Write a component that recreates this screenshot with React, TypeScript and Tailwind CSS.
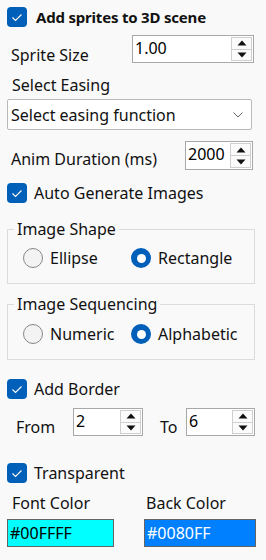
import React from "react";

const font = { fontFamily: '"Noto Sans", "Open Sans", sans-serif' };

function Check() {
  return (
    <div className="w-[20px] h-[20px] rounded-[4px] bg-[#005fb8] flex items-center justify-center shrink-0">
      <svg width="20" height="20" viewBox="0 0 20 20">
        <polyline points="5.5,10.5 8.5,13.5 14.5,7.5" fill="none" stroke="white" strokeWidth="1.1" />
      </svg>
    </div>
  );
}

function Radio({ checked }: { checked: boolean }) {
  return checked ? (
    <div className="w-[20px] h-[20px] rounded-full bg-[#005fb8] flex items-center justify-center shrink-0">
      <div className="w-[9px] h-[9px] rounded-full bg-white" />
    </div>
  ) : (
    <div className="w-[20px] h-[20px] rounded-full border border-[#878787] bg-[#f3f3f3] shrink-0" />
  );
}

function Tri({ up }: { up: boolean }) {
  return (
    <svg width="10" height="6" viewBox="0 0 10 6">
      {up ? <polygon points="0.5,5.5 5,0.5 9.5,5.5" fill="#111" /> : <polygon points="0.5,0.5 9.5,0.5 5,5.5" fill="#111" />}
    </svg>
  );
}

function Spin({ value, w, h }: { value: string; w: string; h: string }) {
  return (
    <div className={`${w} ${h} flex border border-[#a8a8a8] bg-white shrink-0`}>
      <div className="flex-1 pl-[2px] pt-[2px] leading-[20px] text-[16px] text-black">{value}</div>
      <div className="w-[21px] flex flex-col my-[1px] mr-[1px] gap-0">
        <div className="flex-1 border border-[#cfcfcf] bg-[#fbfbfb] flex items-center justify-center">
          <Tri up />
        </div>
        <div className="flex-1 border border-t-0 border-[#cfcfcf] bg-[#fbfbfb] flex items-center justify-center">
          <Tri up={false} />
        </div>
      </div>
    </div>
  );
}

export default function App() {
  return (
    <div style={font} className="w-[266px] h-[560px] bg-[#f9f9f9] text-[16px] text-[#111] px-[7px] flex flex-col overflow-hidden">
      {/* title */}
      <div className="mt-[7px] h-[20px] flex items-center">
        <Check />
        <span className="ml-[9px] font-bold text-[15px] tracking-[-0.2px] leading-[20px] whitespace-nowrap">Add sprites to 3D scene</span>
      </div>

      {/* sprite size */}
      <div className="mt-[8px] flex items-start">
        <span className="pl-[4px] pt-[10px] leading-[20px]">Sprite Size</span>
        <div className="ml-auto mr-[5px]">
          <Spin value="1.00" w="w-[122px]" h="h-[28px]" />
        </div>
      </div>

      <span className="mt-[10px] pl-[5px] leading-[20px]">Select Easing</span>

      <div className="mt-[4px] w-[245px] h-[31px] border border-[#b9b9b9] rounded-[2px] bg-white flex items-center pl-[3px] pr-[8px]">
        <span className="flex-1 leading-[20px]">Select easing function</span>
        <svg width="10" height="6" viewBox="0 0 10 6">
          <polyline points="0.5,0.5 5,5 9.5,0.5" fill="none" stroke="#666" strokeWidth="1" />
        </svg>
      </div>

      {/* anim duration */}
      <div className="mt-[11px] flex items-start">
        <span className="pl-[4px] pt-[8px] leading-[20px] whitespace-nowrap">Anim Duration (ms)</span>
        <div className="ml-auto mr-[6px]">
          <Spin value="2000" w="w-[68px]" h="h-[29px]" />
        </div>
      </div>

      <div className="mt-[13px] h-[20px] flex items-center">
        <Check />
        <span className="ml-[7px] leading-[20px]">Auto Generate Images</span>
      </div>

      {/* image shape */}
      <fieldset className="mt-[16px] w-[248px] border border-[#dcdcdc] px-0 pt-[9px] pb-[15px]">
        <legend className="ml-[6px] px-[3px] leading-[20px]">Image Shape</legend>
        <div className="flex items-center h-[20px] pl-[15px]">
          <Radio checked={false} />
          <span className="ml-[7px] w-[81px] leading-[20px]">Ellipse</span>
          <Radio checked />
          <span className="ml-[7px] leading-[20px]">Rectangle</span>
        </div>
      </fieldset>

      {/* image sequencing */}
      <fieldset className="mt-[10px] w-[248px] border border-[#dcdcdc] px-0 pt-[10px] pb-[15px]">
        <legend className="ml-[6px] px-[3px] leading-[20px]">Image Sequencing</legend>
        <div className="flex items-center h-[20px] pl-[15px]">
          <Radio checked={false} />
          <span className="ml-[7px] w-[81px] leading-[20px]">Numeric</span>
          <Radio checked />
          <span className="ml-[7px] leading-[20px]">Alphabetic</span>
        </div>
      </fieldset>

      <div className="mt-[19px] h-[20px] flex items-center">
        <Check />
        <span className="ml-[7px] leading-[20px]">Add Border</span>
      </div>

      {/* from / to */}
      <div className="mt-[9px] flex items-start">
        <span className="pl-[9px] pt-[9px] leading-[20px] w-[66px]">From</span>
        <Spin value="2" w="w-[70px]" h="h-[28px]" />
        <span className="ml-[17px] pt-[9px] leading-[20px] w-[26px]">To</span>
        <Spin value="6" w="w-[69px]" h="h-[28px]" />
      </div>

      <div className="mt-[26px] h-[20px] flex items-center">
        <Check />
        <span className="ml-[7px] leading-[20px]">Transparent</span>
      </div>

      <div className="mt-[10px] flex leading-[20px]">
        <span className="pl-[5px] w-[139px]">Font Color</span>
        <span>Back Color</span>
      </div>

      <div className="mt-[6px] flex">
        <div className="w-[107px] h-[28px] border border-[#646464] bg-[#00ffff] flex items-center pl-[2px] text-black leading-[20px]">#00FFFF</div>
        <div className="ml-[30px] w-[112px] h-[28px] border border-[#646464] bg-[#0080ff] flex items-center pl-[2px] text-white leading-[20px]">#0080FF</div>
      </div>
    </div>
  );
}
